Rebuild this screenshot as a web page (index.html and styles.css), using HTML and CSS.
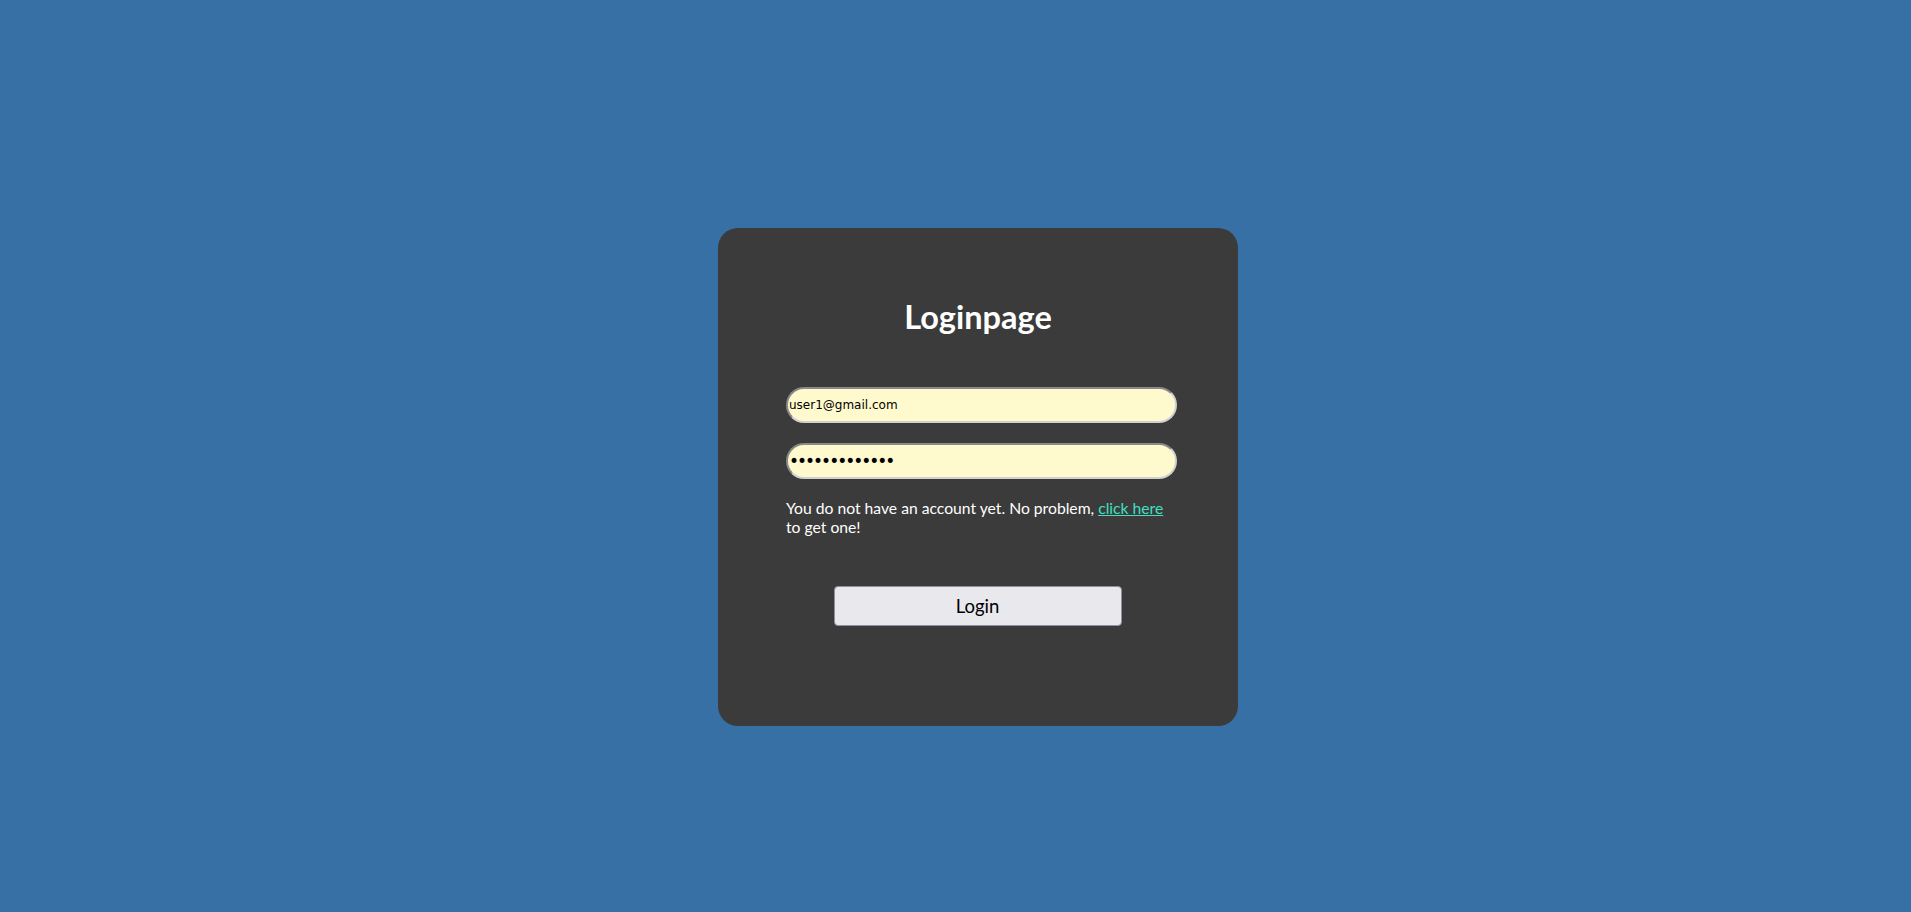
FILE: index.html
```html
<!DOCTYPE html>
<html>
<head>
<meta charset="utf-8">
<link rel="stylesheet" href="styles.css">
</head>
<body>
<div class="card">
  <h1 class="title">Loginpage</h1>
  <form class="form">
    <input class="field" type="text" value="user1@gmail.com">
    <input class="field field-pass" type="password" value="aaaaaaaaaaaaa">
    <p class="note">You do not have an account yet. No problem, <a href="#" class="link">click here</a> to get one!</p>
    <div class="actions"><button type="button" class="btn">Login</button></div>
  </form>
</div>
</body>
</html>
```
FILE: styles.css
```css
html, body { margin: 0; padding: 0; }
body {
  background: #3770a5;
  width: 1911px;
  height: 912px;
  overflow: hidden;
  font-family: Lato, "Liberation Sans", sans-serif;
}
.card {
  box-sizing: border-box;
  margin: 228px 0 0 718px;
  width: 520px;
  height: 498px;
  background: #3b3b3b;
  border-radius: 20px;
  padding: 69px 0 0 68px;
}
.title {
  margin: 0 0 0 -68px;
  text-align: center;
  color: #ffffff;
  font-size: 32.5px;
  font-weight: 700;
  line-height: 40px;
}
.form {
  display: flex;
  flex-direction: column;
  margin-top: 50px;
  width: 391px;
}
.field {
  box-sizing: border-box;
  width: 391px;
  height: 36px;
  margin: 0 0 20px 0;
  padding: 0 0 0 1px;
  border: 2px solid #9a9a9a;
  border-top-color: #8a8a8a;
  border-left-color: #8a8a8a;
  border-right-color: #d0d0d0;
  border-bottom-color: #d0d0d0;
  border-radius: 18px;
  background: #fffacd;
  font-family: "DejaVu Sans", Verdana, sans-serif;
  font-size: 12px;
  color: #000;
  outline: none;
}
.field-pass {
  margin-bottom: 0;
  font-size: 17px;
  letter-spacing: -2px;
}
.note {
  margin: 20px 0 0 0;
  color: #ffffff;
  font-size: 15.7px;
  line-height: 19px;
  width: 391px;
}
.link { color: #40e0c0; }
.actions {
  display: flex;
  justify-content: center;
  margin-top: 49px;
  padding-right: 8px;
}
.btn {
  box-sizing: border-box;
  width: 288px;
  height: 40px;
  background: #e9e9ed;
  border: 1px solid #8f8f9d;
  border-radius: 4px;
  font-family: Lato, "Liberation Sans", sans-serif;
  font-size: 18.5px;
  color: #000;
  padding: 0;
}
```
